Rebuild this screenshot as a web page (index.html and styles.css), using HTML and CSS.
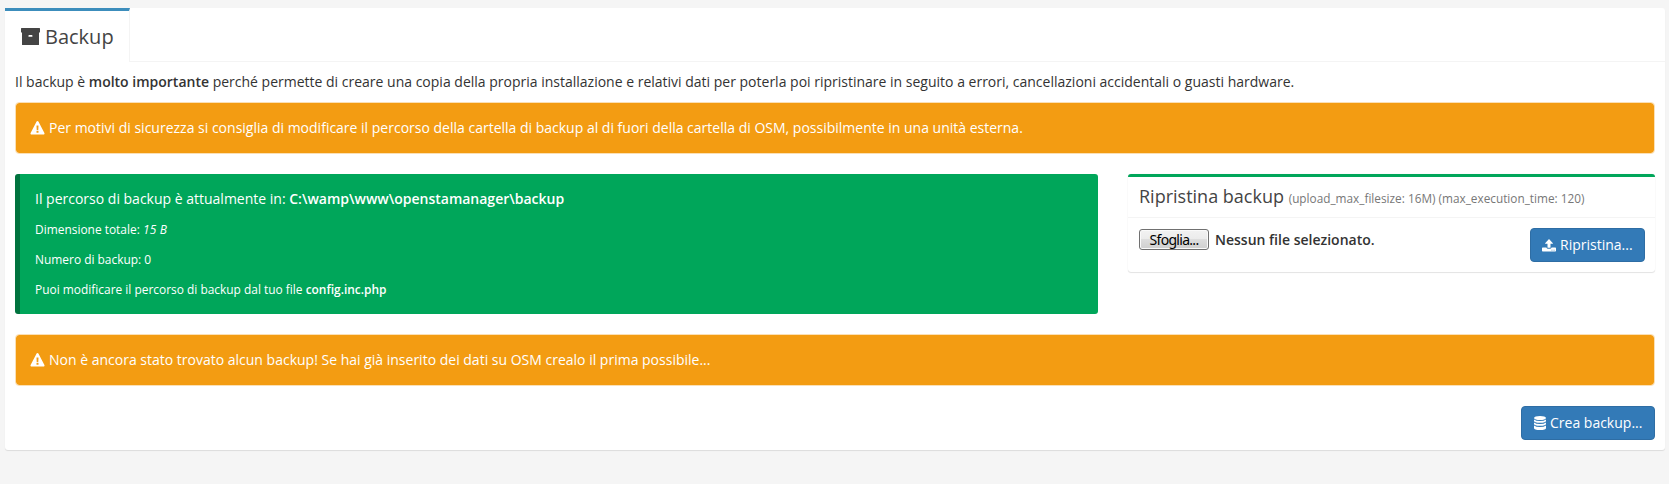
FILE: index.html
```html
<!DOCTYPE html>
<html lang="it">
<head>
<meta charset="utf-8">
<title>Backup</title>
<link rel="stylesheet" href="styles.css">
</head>
<body>
<main class="panel">
  <nav class="tabs">
    <a class="tab"><svg class="icon icon-archive" viewBox="0 -1 20 19"><path fill-rule="evenodd" d="M.6 0h17.800q.6 0 .6.600v3.400q0 .6-.6.600H.6Q0 4.600 0 4V.6Q0 0 .6 0zM1 4.600h17v11.800q0 .6-.6.600H1.600q-.6 0-.6-.6zM8.200 7q-.8 0-.8.900t.8.900h2.500q.8 0 .8-.9t-.8-.9z"/></svg><span class="tab-label">Backup</span></a>
    <div class="tab-rest"></div>
  </nav>
  <div class="content">
    <p class="intro">Il backup è <b>molto importante</b> perché permette di creare una copia della propria installazione e relativi dati per poterla poi ripristinare in seguito a errori, cancellazioni accidentali o guasti hardware.</p>
    <div class="alert"><svg class="icon icon-warning" viewBox="0 0 14 14"><path fill-rule="evenodd" d="M7 0q.6 0 .9.500l6 11.500q.3.500 0 1-.3.500-.9.500H1q-.6 0-.9-.5-.3-.5 0-1L6.100.5Q6.400 0 7 0zM6 4.700l.2 4.100q0 .2.200.2h1.200q.2 0 .2-.2L8 4.700q0-.2-.2-.2H6.200q-.2 0-.2.200zM6.250 9.800q-.25 0-.25.250v1.450q0 .25.250.25h1.500q.25 0 .25-.25v-1.450q0-.25-.25-.25z"/></svg><span>Per motivi di sicurezza si consiglia di modificare il percorso della cartella di backup al di fuori della cartella di OSM, possibilmente in una unità esterna.</span></div>
    <div class="row">
      <section class="callout">
        <p class="path">Il percorso di backup è attualmente in: <b>C:\wamp\www\openstamanager\backup</b></p>
        <p>Dimensione totale: <i>15 B</i></p>
        <p>Numero di backup: 0</p>
        <p>Puoi modificare il percorso di backup dal tuo file <b>config.inc.php</b></p>
      </section>
      <section class="box">
        <h3 class="box-header"><span class="box-title">Ripristina backup</span> <small>(upload_max_filesize: 16M) (max_execution_time: 120)</small></h3>
        <div class="box-body">
          <div class="file"><button class="browse">Sfoglia...</button><span class="file-name">Nessun file selezionato.</span></div>
          <button class="btn btn-restore"><svg class="icon icon-upload" viewBox="0 0 14 13"><path d="M7 0l3.900 4.200q.2.600-.5.600H8.500v3.400q0 .5-.5.500H6q-.5 0-.5-.5V4.800H3.600q-.7 0-.5-.6z"/><path fill-rule="evenodd" d="M.7 8.500h3.700Q4.900 9.700 6 9.700h2q1.100 0 1.600-1.200h3.700q.7 0 .7.700v2.600q0 .7-.7.700H.7q-.7 0-.7-.7V9.200q0-.7.700-.7zM9.500 10.800v.8h.9v-.8zM11.600 10.800v.8h.9v-.8z"/></svg><span>Ripristina...</span></button>
        </div>
      </section>
    </div>
    <div class="alert"><svg class="icon icon-warning" viewBox="0 0 14 14"><path fill-rule="evenodd" d="M7 0q.6 0 .9.500l6 11.500q.3.500 0 1-.3.500-.9.500H1q-.6 0-.9-.5-.3-.5 0-1L6.100.5Q6.400 0 7 0zM6 4.700l.2 4.100q0 .2.200.2h1.200q.2 0 .2-.2L8 4.700q0-.2-.2-.2H6.200q-.2 0-.2.200zM6.250 9.800q-.25 0-.25.250v1.450q0 .25.250.25h1.500q.25 0 .25-.25v-1.450q0-.25-.25-.25z"/></svg><span>Non è ancora stato trovato alcun backup! Se hai già inserito dei dati su OSM crealo il prima possibile...</span></div>
    <div class="actions">
      <button class="btn btn-create"><svg class="icon icon-database" viewBox="0 0 12 14"><ellipse cx="6" cy="2" rx="6" ry="2"/><path d="M0 3.400Q1.900 4.900 6 4.900t6-1.500v1.300q0 2-6 2t-6-2zM0 6.400Q1.900 7.900 6 7.900t6-1.500v1.300q0 2-6 2t-6-2zM0 9.400q1.900 1.500 6 1.500t6-1.500V12q0 2-6 2t-6-2z"/></svg><span>Crea backup...</span></button>
    </div>
  </div>
</main>
</body>
</html>
```
FILE: styles.css
```css
* { box-sizing: border-box; }
body {
  margin: 0;
  padding: 8px 4px 0 5px;
  min-height: 484px;
  background: #f5f5f5;
  color: #333;
  font: 14px/20px "Open Sans", "Noto Sans", sans-serif;
}
p { margin: 0; }
b { font-weight: 600; }
.icon { display: block; flex: none; fill: currentColor; }
.panel {
  height: 442px;
  background: #fff;
  border-radius: 3px;
  box-shadow: 0 1px 1px rgba(0, 0, 0, .1);
}
.tabs { display: flex; height: 54px; }
.tab {
  display: flex;
  align-items: center;
  width: 125px;
  padding: 0 0 0 16px;
  border-top: 3px solid #3c8dbc;
  border-right: 1px solid #f4f4f4;
  color: #444;
  font-size: 20px;
}
.tab-label { margin-left: 4px; }
.icon-archive { width: 20px; height: 19px; }
.tab-rest { flex: 1; border-bottom: 1px solid #f4f4f4; }
.content { padding: 10px; }
.intro { height: 20px; margin-bottom: 10px; white-space: nowrap; }
.alert {
  display: flex;
  align-items: center;
  height: 52px;
  padding: 0 15px 0 14px;
  border: 1px solid #fbe0b5;
  border-radius: 4px;
  background: #f39c12;
  background-clip: padding-box;
  color: #fff;
}
.alert span { margin-left: 4px; white-space: nowrap; }
.icon-warning { width: 15px; height: 14px; }
.row {
  display: grid;
  grid-template-columns: 1083px 527px;
  column-gap: 30px;
  align-items: start;
  margin: 20px 0;
}
.callout {
  height: 140px;
  padding: 15px 30px 15px 15px;
  border-left: 5px solid #00733e;
  border-radius: 3px;
  background: #00a65a;
  color: #fff;
  font-size: 11.930px;
  line-height: 20px;
}
.callout p { height: 20px; margin-bottom: 10px; white-space: nowrap; }
.callout .path { font-size: 14px; line-height: 20px; }
.callout i { letter-spacing: .2px; }
.box {
  height: 98px;
  border-top: 3px solid #00a65a;
  border-radius: 3px;
  background: #fff;
  box-shadow: 0 1px 1px rgba(0, 0, 0, .1), 0 0 1px rgba(0, 0, 0, .12);
}
.box-header {
  height: 41px;
  margin: 0;
  padding: 9px 10px 11px 11px;
  border-bottom: 1px solid #f4f4f4;
  color: #444;
  font-size: 18px;
  font-weight: 400;
  line-height: 20px;
  white-space: nowrap;
}
.box-header small { color: #777; font-size: 11.800px; }
.box-body { display: flex; justify-content: space-between; align-items: flex-start; padding: 10px 10px 10px 11px; }
.file { display: flex; align-items: center; height: 22px; padding-top: 1px; }
.browse {
  width: 70px;
  height: 21px;
  padding: 0;
  border: 1px solid #707070;
  border-radius: 3px;
  background: linear-gradient(#f2f2f2, #ebebeb 49%, #ddd 50%, #cfcfcf);
  box-shadow: inset 0 0 0 1px #fafafa;
  color: #000;
  font: 14px/19px "Noto Sans", sans-serif;
  letter-spacing: -.7px;
}
.file-name { margin-left: 6px; font-weight: 600; }
.btn {
  display: flex;
  align-items: center;
  height: 34px;
  padding: 0 11px;
  border: 1px solid #2e6da4;
  border-radius: 4px;
  background: #337ab7;
  color: #fff;
  font: 14px/20px "Open Sans", "Noto Sans", sans-serif;
  white-space: nowrap;
}
.btn span { margin-left: 4px; }
.btn-restore { width: 115px; }
.btn-create { width: 134px; padding-left: 12px; }
.icon-upload { width: 14px; height: 13px; }
.icon-database { width: 12px; height: 14px; }
.actions { display: flex; justify-content: flex-end; margin-top: 20px; }
```
